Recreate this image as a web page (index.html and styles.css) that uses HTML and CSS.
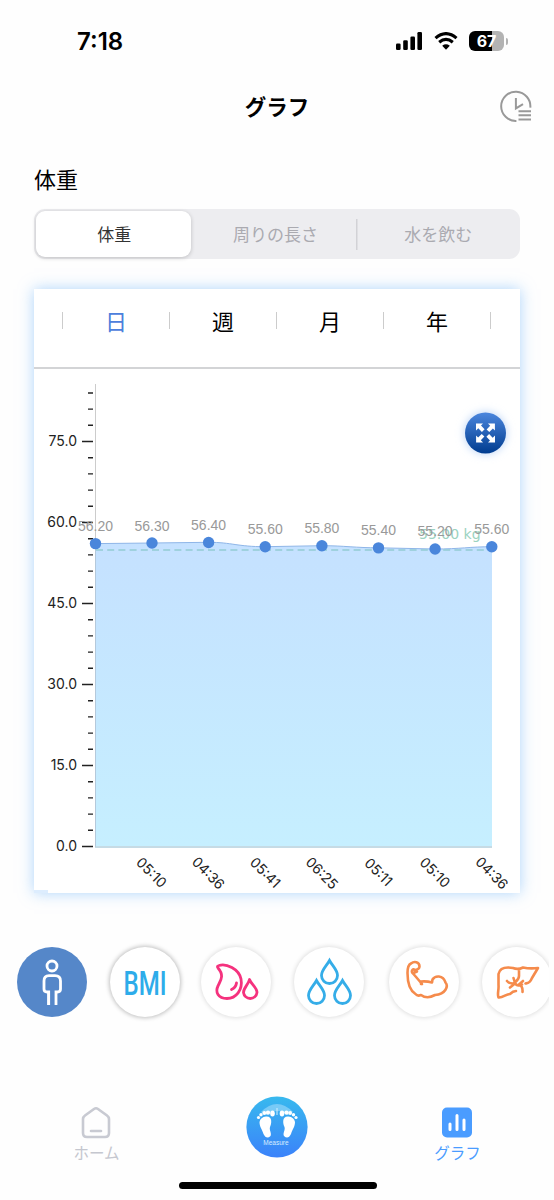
FILE: index.html
```html
<!DOCTYPE html>
<html lang="ja">
<head>
<meta charset="utf-8">
<title>グラフ</title>
<link rel="stylesheet" href="styles.css">
</head>
<body>
<div class="app">
  <div class="status">
    <span class="clock">7:18</span>
    <div class="status-icons">
      <svg width="27" height="18" viewBox="0 0 27 18"><rect x="0" y="11.5" width="4.6" height="6.5" rx="1.3"/><rect x="7.2" y="8.2" width="4.6" height="9.8" rx="1.3"/><rect x="14.4" y="4.4" width="4.6" height="13.6" rx="1.3"/><rect x="21.4" y="0" width="4.6" height="18" rx="1.3"/></svg>
      <svg width="24" height="18" viewBox="0 0 24 18"><path d="M1.5 6.1Q12 -2.8 22.5 6.1M5.2 10.2Q12 4.7 18.8 10.2" fill="none" stroke="#000" stroke-width="3.2"/><path d="M8.2 13.8Q12 10.9 15.8 13.8L12 17.7Z"/></svg>
      <div class="battery"><span class="battery-body">67</span><span class="battery-cap"></span></div>
    </div>
  </div>
  <header class="nav">
    <h1>グラフ</h1>
    <svg class="history" width="34" height="34" viewBox="0 0 34 34" fill="none" stroke="#999" stroke-width="2"><path d="M16.4 30.9A14.6 14.6 0 1 1 30.3 17.7"/><path d="M15.9 8V18.4L23 14.2"/><path d="M18.5 21.3H31M18.5 25.3H31M18.5 29.4H31"/></svg>
  </header>
  <main>
    <h2>体重</h2>
    <div class="segments">
      <span class="segment active">体重</span>
      <span class="segment">周りの長さ</span>
      <span class="segment divided">水を飲む</span>
    </div>
    <section class="card">
      <div class="periods">
        <i></i><span class="current">日</span><i></i><span>週</span><i></i><span>月</span><i></i><span>年</span><i></i>
      </div>
      <svg class="chart" width="486" height="524" viewBox="34 369 486 524">
        <defs>
          <linearGradient id="area" x1="0" y1="0" x2="0" y2="1"><stop offset="0" stop-color="#c5e1ff"/><stop offset="1" stop-color="#c6efff"/></linearGradient>
          <linearGradient id="button" x1="0" y1="0" x2="0" y2="1"><stop offset="0" stop-color="#4b86dd"/><stop offset="1" stop-color="#003c8f"/></linearGradient>
          <filter id="glow" x="-50%" y="-50%" width="200%" height="200%"><feGaussianBlur stdDeviation="4"/></filter>
        </defs>
        <path d="M95.5 384V847" stroke="#ccc"/>
        <path class="fill" fill="url(#area)" d="M95.5 543.6L152 543L208.5 542.3C232 542.3 237 546.7 265 546.7L322 545.7C345 545.7 355 547.8 378.5 547.8L435 549C460 549 470 546.7 492 546.7V846H95.5Z"/>
        <path d="M95.5 543.6L152 543L208.5 542.3C232 542.3 237 546.7 265 546.7L322 545.7C345 545.7 355 547.8 378.5 547.8L435 549C460 549 470 546.7 492 546.7" fill="none" stroke="#8fb6e8"/>
        <path d="M95.5 543V847" stroke="#b5c9db"/>
        <path d="M95 847H492" stroke="#b3cfdd" stroke-width="1.6"/>
        <path d="M96 550H492" stroke="#93cbd3" stroke-width="1.5" stroke-dasharray="7 4.2"/>
        <g stroke="#222" stroke-width="1.4">
          <path d="M82 441.5H93M82 522.5H93M82 603.5H93M82 684.5H93M82 765.5H93M82 846.5H93"/>
          <path d="M88 393H93M88 409.1H93M88 425.3H93M88 457.7H93M88 473.9H93M88 490.1H93M88 506.3H93M88 538.7H93M88 554.9H93M88 571.1H93M88 587.3H93M88 619.7H93M88 635.9H93M88 652.1H93M88 668.3H93M88 700.7H93M88 716.9H93M88 733.1H93M88 749.3H93M88 781.7H93M88 797.9H93M88 814.1H93M88 830.3H93"/>
        </g>
        <g class="axis end"><text x="77" y="446">75.0</text><text x="77" y="527">60.0</text><text x="77" y="608">45.0</text><text x="77" y="689">30.0</text><text x="77" y="770">15.0</text><text x="77" y="851">0.0</text></g>
        <g fill="#4a86db"><circle cx="95.5" cy="543.6" r="5.7"/><circle cx="152" cy="543" r="5.7"/><circle cx="208.6" cy="542.5" r="5.7"/><circle cx="265.2" cy="546.8" r="5.7"/><circle cx="321.9" cy="545.7" r="5.7"/><circle cx="378.5" cy="547.9" r="5.7"/><circle cx="435.1" cy="549" r="5.7"/><circle cx="491.8" cy="546.7" r="5.7"/></g>
        <text class="target" x="419" y="538.5">55.00 kg</text>
        <g class="values"><text x="95.5" y="531">56.20</text><text x="152" y="530.5">56.30</text><text x="208.6" y="530">56.40</text><text x="265.2" y="534.2">55.60</text><text x="321.9" y="533.2">55.80</text><text x="378.5" y="535.4">55.40</text><text x="435.1" y="536.4">55.20</text><text x="491.8" y="534.2">55.60</text></g>
        <g class="axis times">
          <text transform="translate(151.5 872.5) rotate(45)" y="5">05:10</text><text transform="translate(208.3 873) rotate(45)" y="5">04:36</text><text transform="translate(265.3 872.5) rotate(45)" y="5">05:41</text><text transform="translate(322 873) rotate(45)" y="5">06:25</text><text transform="translate(378.5 872) rotate(45)" y="5">05:11</text><text transform="translate(435 872.5) rotate(45)" y="5">05:10</text><text transform="translate(491.8 873) rotate(45)" y="5">04:36</text>
        </g>
        <circle cx="485.5" cy="433" r="21" fill="#bdd5f7" filter="url(#glow)"/>
        <circle cx="485.5" cy="433" r="20.5" fill="url(#button)"/>
        <g id="arrows" fill="#fff"><path id="arrow" d="M476 423.6h7l-2 2 3.6 3.6-2.7 2.7-3.6-3.6-2.3 2.3z"/><use href="#arrow" transform="rotate(90 485.5 433)"/><use href="#arrow" transform="rotate(180 485.5 433)"/><use href="#arrow" transform="rotate(270 485.5 433)"/></g>
        <rect x="34" y="890" width="14" height="3" fill="#ddedfe"/>
      </svg>
    </section>
  </main>
  <div class="metrics">
    <div class="metric selected"><svg width="70" height="70" viewBox="0 0 70 70" fill="none" stroke="#fff" stroke-width="2.8"><circle cx="35" cy="19" r="5"/><path d="M31.7 58V45H30Q27 45 27 42V34Q27 28.700 32 28.700H38Q43.500 28.700 43.500 34V42Q43.500 45 40.500 45H39V58M31.500 44V58M39 44V58"/></svg></div>
    <div class="metric strong"><svg width="70" height="70" viewBox="0 0 70 70"><text class="bmi" x="13.500" y="47.500" textLength="43" lengthAdjust="spacingAndGlyphs">BMI</text></svg></div>
    <div class="metric"><svg width="70" height="70" viewBox="0 0 70 70" fill="none" stroke="#f5327e" stroke-width="2.800" stroke-linejoin="round" stroke-linecap="round"><path d="M18 18.500C25 16 38 22 40 32C42 43 35 51.500 26 51.500C17 51.500 14 45 17 39C19 34 24 29 17 21Q15.500 19 18 18.500ZM35.500 36C35 39.500 34 41 30.500 42.500"/><path d="M48.500 32.500C50 37 56 40.500 56 45.500A6.800 6.800 0 0 1 42.500 45.500C42.500 41 47 38 48.500 32.500Z"/></svg></div>
    <div class="metric"><svg width="70" height="70" viewBox="0 0 70 70" fill="none" stroke="#35ade8" stroke-width="2.800"><path id="drop" d="M35.500 13.500C32.500 19 27.500 23 27.500 28.500A8 8 0 0 0 43.500 28.500C43.500 23 38.500 19 35.500 13.500Z"/><use href="#drop" transform="translate(-13 20)"/><use href="#drop" transform="translate(13 20)"/></svg></div>
    <div class="metric"><svg width="70" height="70" viewBox="0 0 70 70" fill="none" stroke="#f58b4c" stroke-width="2.600" stroke-linejoin="round" stroke-linecap="round"><path d="M33 37L27.500 30.500L24 26.500C21.500 24 24 21 25.500 23Q30.500 22.500 30.500 19.500C30.500 14.500 25 14 22 16.500Q18.500 18 18.500 26Q18.500 42 26.500 47Q28.500 49.500 32 48Q38 52.500 46 48C57 47 59.500 39 56.500 35.500C54 27.500 46 28.500 43.500 32.500L43 35.500Q38 34 32 34.500V37M24.500 26L28 24.500"/></svg></div>
    <div class="metric"><svg width="70" height="70" viewBox="0 0 70 70" fill="none" stroke="#f58b4c" stroke-width="2.600" stroke-linejoin="round" stroke-linecap="round"><path d="M34 44Q31 44 28 47C24 47 21 51 16.500 50.500C15 47 17 43 16.500 38V27C18 20 25 20 31 21Q36 23 41 20.500Q48 22 56 21Q53 26 50 31C48 36 46 36 43.500 36.500M37 23V29Q37 32 33.500 35M25 34Q28 37.500 33 36Q35 40 40 37.500M28 40.500L33 36.500M31.500 31L33 36M41 34L37 37.500Q41 39 40.500 45"/></svg></div>
  </div>
  <nav class="tabs">
    <div class="tab"><svg width="30" height="33" viewBox="0 0 30 33" fill="none" stroke="#c8cad2" stroke-width="2.600" stroke-linejoin="round"><path d="M4 9.500Q2 11 2 13V27Q2 31 6 31H24Q28 31 28 27V13Q28 11 26 9.500L17 3Q15 1.500 13 3Z"/><path d="M10 25H20" stroke-linecap="round"/></svg><span>ホーム</span></div>
    <div class="measure"><svg width="62" height="62" viewBox="0 0 62 62"><defs><linearGradient id="blue" x1="0" y1="0" x2="0" y2="1"><stop offset="0" stop-color="#38b9ee"/><stop offset="1" stop-color="#3b82fa"/></linearGradient></defs><circle cx="31" cy="31" r="30.600" fill="url(#blue)"/><path d="M15 16Q31 0 47 16L42 19Q31 11 20 19Z" fill="#78caf6"/><g id="foot" fill="#fff"><path d="M20 20.500C27 20 25.500 28 24 31C23 34 26 37 24.500 40Q20.500 44 17.500 38C16 33 13.500 31 13.500 26Q14.500 21 20 20.500Z"/><ellipse cx="26.500" cy="17.500" rx="2.300" ry="2.900"/><circle cx="22" cy="16.600" r="2.200"/><circle cx="18.300" cy="17" r="1.900"/><circle cx="15" cy="18.800" r="1.700"/><circle cx="12.500" cy="21.500" r="1.600"/></g><use href="#foot" transform="matrix(-1 0 0 1 62.500 0)"/><path d="M31 12V19" stroke="#d3efff"/><text class="measure-label" x="30" y="49">Measure</text></svg></div>
    <div class="tab on"><svg width="30" height="33" viewBox="0 0 30 33"><rect y="1.500" width="30" height="30" rx="5" fill="#4a9cff"/><path d="M8 18V23.500M15 9.500V23.500M22 14V23.500" stroke="#fff" stroke-width="3" stroke-linecap="round"/></svg><span>グラフ</span></div>
  </nav>
  <div class="home-indicator"></div>
</div>
</body>
</html>
```
FILE: styles.css
```css
* { box-sizing: border-box; }
body { margin: 0; background: #fff; color: #000; font-family: "Liberation Sans", "Noto Sans CJK JP", sans-serif; }
svg { display: block; flex: none; }
.app { width: 554px; height: 1200px; overflow: hidden; display: flex; flex-direction: column; background: #fefefe; }
.status { height: 82px; display: flex; justify-content: space-between; align-items: center; padding: 0 46px 0 77px; }
.clock { font: 600 24px/28px Inter, sans-serif; padding-top: 2px; }
.status-icons { display: flex; align-items: center; gap: 11px; }
.battery { display: flex; align-items: center; gap: 2px; }
.battery-body { width: 35px; height: 20px; border-radius: 6px; background: linear-gradient(90deg, #000 67%, #b3b3b3 67%); color: #fff; font: 700 16px/20px Inter, sans-serif; text-align: center; }
.battery-cap { width: 2px; height: 7px; border-radius: 0 2px 2px 0; background: #b3b3b3; }
.nav { height: 48px; display: grid; grid-template-columns: 1fr auto 1fr; align-items: center; padding: 0 21px; }
.nav h1 { grid-column: 2; margin: 0; font: 700 21.500px/30px "Noto Sans CJK JP", sans-serif; }
.history { justify-self: end; margin: 2px -1px 0 0; }
main { padding: 32px 34px 0; }
h2 { margin: 0 0 15px; font: 400 22px/32px "Noto Sans CJK JP", sans-serif; }
.segments { height: 50px; border-radius: 11px; background: #ededf0; padding: 2px; display: flex; align-items: center; }
.segment { width: 163px; padding-left: 2px; text-align: center; color: #aaaab0; font: 400 17px/46px "Noto Sans CJK JP", sans-serif; }
.segment.active { width: 156px; margin-right: 3px; height: 46px; border-radius: 9px; background: #fff; color: #333; box-shadow: 0 1px 4px rgba(0,0,0,.2); }
.segment.divided { margin-left: 1px; background: linear-gradient(#d2d2d6, #d2d2d6) left center / 1.5px 31px no-repeat; }
.card { margin-top: 30px; background: #fff; height: 604px; box-shadow: 0 0 14px rgba(130,190,250,.65); }
.periods { height: 80px; border-bottom: 2px solid #d3d4d6; padding: 0 29px 15px 28px; display: flex; align-items: center; justify-content: space-between; font: 400 22px/30px "Noto Sans CJK JP", sans-serif; }
.periods span { margin-bottom: 2px; }
.periods i { width: 1px; height: 17px; background: #ccc; }
.periods .current { color: #4c80dc; }
.axis { font: 400 14px Inter, sans-serif; fill: #222; }
.end { text-anchor: end; }
.times { text-anchor: middle; }
.values { font: 400 14px "Liberation Sans", sans-serif; fill: #999; text-anchor: middle; }
.target { font: 400 14px "DejaVu Sans", sans-serif; fill: #9bd3c1; }
.metrics { display: flex; width: 549px; overflow: hidden; padding: 44px 0 20px 17px; gap: 23px; margin-top: 10px; }
.metric { flex: none; width: 70px; height: 70px; border-radius: 50%; background: #fff; box-shadow: 0 0 4px 1px rgba(0,0,0,.12); }
.metric:nth-child(3) { margin-left: -2.500px; }
.metric:nth-child(5) { margin-left: 2.500px; }
.metric.selected { background: #5587c9; box-shadow: none; }
.metric.strong { box-shadow: 0 0 4px 1px rgba(0,0,0,.25); }
.bmi { font: 500 34px Roboto, sans-serif; fill: #2dacea; }
.tabs { height: 65px; margin-top: 59px; display: grid; grid-template-columns: 97px 1fr 97px; padding: 0 48px; justify-items: center; align-items: start; }
.tab { padding-top: 10px; display: flex; flex-direction: column; align-items: center; font: 400 15.500px/27px "Noto Sans CJK JP", sans-serif; color: #c5c7cf; }
.tab.on { color: #4a9cff; }
.measure-label { font: 400 6.500px "Liberation Sans", sans-serif; fill: #d9edff; text-anchor: middle; }
.home-indicator { width: 198px; height: 7px; flex: none; border-radius: 4px; background: #000; margin: 21px auto 0 179px; }
```
